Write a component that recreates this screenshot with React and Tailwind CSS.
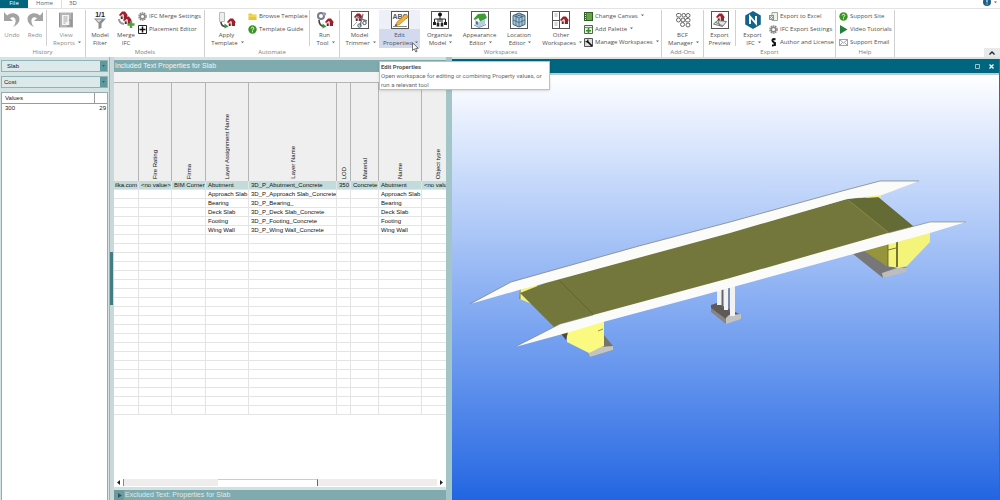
import clsx from "clsx";

/* ---------- ribbon icons ---------- */

const Svg = ({ box = 18, className, children }) => (
    <svg viewBox={`0 0 ${box} ${box}`} className={className || "w-[18px] h-[18px]"} fill="none">
        {children}
    </svg>
);

const House = ({ x = 0, y = 0 }) => (
    <g transform={`translate(${x} ${y})`}>
        <path d="M1 4h7v4H1z" fill="#d9c7c4" />
        <path d="M5 4h3v4H5z" fill="#8d2230" />
        <path d="M0 4 3 0.5h3L9 4.5 5.5 5 4 3 1 5z" fill="#a11f2d" />
        <path d="M2 5.5h1.6V8H2z" fill="#4a2a2a" />
    </g>
);

const Frame = ({ children }) => (
    <Svg>
        <rect x="0.5" y="0.5" width="17" height="17" fill="#fff" stroke="#555" />
        {children}
    </Svg>
);

const UndoIcon = () => (
    <Svg>
        <path d="M1 1v9h9L7 7.200c3-2.200 6-.4 5.600 3.200-.2 2.200-1.200 3.800-2.600 5.600 4-1.800 6.500-4.600 6.500-8C16.500 2.500 9 .2 4 4.400z" fill="#a3a3a3" />
    </Svg>
);
const RedoIcon = () => (
    <Svg>
        <path d="M17 1v9H8l3-2.800C8 5 5 6.800 5.400 10.400c.2 2.200 1.200 3.800 2.600 5.600-4-1.800-6.500-4.600-6.500-8C1.500 2.500 9 .2 14 4.400z" fill="#a3a3a3" />
    </Svg>
);
const ReportIcon = () => (
    <Svg>
        <path d="M2 1.500h14v15H2z" fill="#b5b5b5" />
        <path d="M5 4h7v10H5z" fill="#f4f4f4" />
        <path d="M2.500 2v14M15 2v14" stroke="#8f8f8f" />
        <path d="M6.500 6h4M6.500 8h4M6.500 10h4M6.500 12h2" stroke="#a5a5a5" />
        <path d="M12 9h2v6h-4" stroke="#888" />
    </Svg>
);
const FilterIcon = () => (
    <Svg>
        <text x="9" y="6" textAnchor="middle" fontSize="7" fontWeight="700" fill="#222" fontFamily="Liberation Sans, sans-serif">1/1</text>
        <path d="M3 7.500h12l-4.500 5V17L7.500 18v-5.500z" fill="#8d8d8d" />
        <path d="M5 8.500h6l-3 3z" fill="#dcdcdc" />
    </Svg>
);
const MergeIcon = () => (
    <Svg>
        <House x="2" y="0" />
        <path d="M2 8c0 3 2 4.500 5 5" stroke="#999" strokeWidth="2" />
        <House x="6" y="5" />
        <path d="M14 10v7M10.500 13.500h7" stroke="#4ca53b" strokeWidth="2.400" />
    </Svg>
);
const ApplyIcon = () => (
    <Svg>
        <path d="M1.500 1.500h5v9h-5z" fill="#eee" stroke="#bbb" />
        <path d="M3 11c0 3 2 4.500 5 4.500" stroke="#444" strokeWidth="1.600" />
        <path d="m6.500 12.500 4 3-4 2z" fill="#37933a" />
        <House x="9" y="7" />
    </Svg>
);
const RunIcon = () => (
    <Svg>
        <circle cx="5" cy="5" r="3" stroke="#7a7a8a" strokeWidth="2" />
        <circle cx="8.500" cy="3" r="1.800" fill="#9d9dac" />
        <path d="M3 9c0 4 2 6 5 6.500" stroke="#444" strokeWidth="1.600" />
        <path d="m6.500 12.500 4 3-4 2z" fill="#37933a" />
        <House x="9" y="7" />
    </Svg>
);
const TrimmerIcon = () => (
    <Frame>
        <House x="3" y="2" />
        <path d="M5 5c3 2 7 4 11 5M12 3 9 15" stroke="#777" strokeWidth="1.300" />
        <circle cx="13.500" cy="12" r="1.700" stroke="#3d5960" />
        <circle cx="8.500" cy="14.500" r="1.700" stroke="#3d5960" />
        <path d="m2 15 4-4" stroke="#aaa" />
    </Frame>
);
const EditIcon = () => (
    <Frame>
        <text x="9" y="8" textAnchor="middle" fontSize="7" fontWeight="700" fill="#555" fontFamily="Liberation Sans, sans-serif">ABC</text>
        <path d="M15 3 6 11l-2 4 4.500-1.500L17 6z" fill="#f0b43c" stroke="#a6701b" strokeWidth=".6" />
        <path d="m4 15 1-2 1.200 1.200z" fill="#333" />
        <path d="M2 15.500h14" stroke="#888" />
    </Frame>
);
const OrganizeIcon = () => (
    <Frame>
        <path d="M9 4v4M3.500 12V8h11v4M7 8v6M11 8v6M9 8v3" stroke="#222" />
        <circle cx="9" cy="3.500" r="2" fill="#111" />
        <path d="M2 11h3v3H2zM5.700 12h2.600v3.500H5.700zM9.700 12h2.600v3.500H9.700zM13 11h3v3h-3z" fill="#222" />
    </Frame>
);
const AppearanceIcon = () => (
    <Frame>
        <path d="m4 9 4 2 6-3v5l-6 3-4-2.500z" fill="#b7cbe3" />
        <path d="M2.500 8 7 3l7-.5L16 7l-7 3.500L7.500 7 4 9z" fill="#3f9b35" />
        <path d="m5 10 2 1v3l-2-1z" fill="#54749c" />
        <path d="m3 14 5 2.500 7-3" stroke="#6f9bb5" />
    </Frame>
);
const LocationIcon = () => (
    <Frame>
        <path d="m9 2 6 2.500v9L9 16l-6-2.500v-9z" fill="#a9c2d4" stroke="#3e6681" />
        <path d="m3 4.500 6 2.500 6-2.500M9 7v9M3 9l6 2.500L15 9M6 3.500v11.300M12 3.500v11.300M6 3.300l6 2.400M12 3.300 6 5.700" stroke="#3e6681" strokeWidth=".8" />
    </Frame>
);
const OtherIcon = () => (
    <Frame>
        <path d="M7.500 1v16M1 9.500h6" stroke="#555" />
        <path d="M2.500 3h3M2.500 5h3M2.500 12h3M2.500 14h3" stroke="#aaa" />
        <House x="8" y="5" />
    </Frame>
);
const BcfIcon = () => (
    <Svg>
        <g stroke="#666" strokeWidth="1">
            <rect x="2.500" y="2.500" width="4.500" height="3.500" rx="1.500" />
            <rect x="8" y="2.500" width="3.500" height="3.500" rx="1.500" />
            <circle cx="14" cy="4.500" r="2" />
            <circle cx="4.500" cy="9" r="2" />
            <circle cx="9" cy="9" r="2" />
            <rect x="11.500" y="7.500" width="4.500" height="3.500" rx="1.500" />
            <circle cx="8.500" cy="13.500" r="2" />
            <circle cx="14" cy="14" r="2" />
        </g>
    </Svg>
);
const PreviewIcon = () => (
    <Frame>
        <House x="5" y="2" />
        <path d="m2.500 13 4-3.500 9 1-4 5z" stroke="#777" fill="#e6e6e6" />
        <path d="m4 11 8 4M7 10l2 5" stroke="#666" strokeWidth=".8" />
    </Frame>
);
const HexIcon = () => (
    <Svg>
        <path d="m9 0 7.800 4.500v9L9 18l-7.800-4.500v-9z" fill="#14638a" />
        <path d="M6 13V5.500l6 7V5" stroke="#fff" strokeWidth="1.900" />
    </Svg>
);

const small = "w-[9px] h-[9px] shrink-0";
const Gear = () => (
    <Svg box={9} className={small}>
        <circle cx="4.500" cy="4.500" r="3.600" stroke="#888" strokeWidth="1.400" strokeDasharray="1.600 .66" />
        <circle cx="4.500" cy="4.500" r="2.300" stroke="#888" strokeWidth="1.600" />
    </Svg>
);
const Plus = () => (
    <Svg box={9} className={small}>
        <path d="M.5.5h8v8h-8z" stroke="#222" />
        <path d="M4.500 1.500v6M1.500 4.500h6" stroke="#111" strokeWidth="1.500" />
    </Svg>
);
const Folder = () => (
    <Svg box={9} className={small}>
        <path d="M.5 1.500h3l1 1h4v5.500h-8z" fill="#e9c92f" />
        <path d="M.5 4h8" stroke="#f6e382" />
    </Svg>
);
const Guide = () => (
    <Svg box={9} className={small}>
        <circle cx="4.500" cy="4.500" r="4.200" fill="#3a9623" />
        <path d="M3.200 3.500c0-1.800 2.800-1.600 2.600 0-.1.900-1.300.9-1.300 2M4.500 6.300v1" stroke="#fff" />
    </Svg>
);
const Canvas = () => (
    <Svg box={9} className={small}>
        <path d="M0 0h9v9H0z" fill="#2f5f25" />
        <path d="M2.500 1H8v7H2.500z" fill="#67a548" />
        <path d="M1.500 1v7" stroke="#ddd" strokeDasharray="1 1" />
    </Svg>
);
const Palette = () => (
    <Svg box={9} className={small}>
        <path d="M.5.5h8v8h-8z" stroke="#4a6b46" fill="#e8f0e4" />
        <path d="M1 2.500h7" stroke="#7b9476" />
        <path d="M4.500 3v5.500M2 5.700h5" stroke="#3d8b30" strokeWidth="1.600" />
    </Svg>
);
const Wrench = () => (
    <Svg box={9} className={small}>
        <path d="M.5.5h8v8h-8z" stroke="#555" fill="#ddd" />
        <path d="m3 3 5 5" stroke="#111" strokeWidth="1.700" />
        <path d="M1.500 3.500 3.500 4 4 1.500" stroke="#111" strokeWidth="1.200" />
    </Svg>
);
const Excel = () => (
    <Svg box={9} className={small}>
        <path d="M3 .5h5.500v8H3z" fill="#eef3ee" stroke="#9aa89a" />
        <path d="M0 3h5v5H0z" fill="#7f9d84" />
        <path d="m1.200 4 2.600 3M3.800 4 1.200 7" stroke="#fff" strokeWidth=".8" />
    </Svg>
);
const License = () => (
    <Svg box={9} className={small}>
        <path d="M6.500 1.500c-3-1.200-4 .8-2 2.600s2 3.600-1.500 3.400" stroke="#111" strokeWidth="2" />
        <path d="M6.300 4v4" stroke="#111" />
    </Svg>
);
const Play = () => (
    <Svg box={9} className={small}>
        <path d="M1 0v9l7.500-4.500z" fill="#25803b" />
    </Svg>
);
const Mail = () => (
    <Svg box={9} className={small}>
        <path d="M.5 1.500h8v6h-8zM.5 1.500l4 3.500 4-3.500M.5 7.500 3.500 4.500M8.500 7.500 5.500 4.500" stroke="#8b8b8b" strokeWidth=".8" />
    </Svg>
);

/* ---------- ribbon pieces ---------- */

const Caret = () => (
    <svg viewBox="0 0 4 3" className="inline-block w-[3px] h-[3px] ml-[3px] mb-px" fill="#666">
        <path d="M0 0h4L2 2.500z" />
    </svg>
);

function BigButton({ icon: Icon, lines, menu, width, active, dim }) {
    return (
        <button
            className={clsx(
                "flex flex-col items-center shrink-0 h-[38px] pt-px leading-[8px] whitespace-nowrap",
                width || "w-[40px]",
                active && "bg-linear-to-b from-[#eef0f8] from-50% to-[#d3d9ee] to-50%",
                dim && "text-[#8c8c8c]"
            )}
        >
            <Icon />
            <span className="mt-[2px]">{lines[0]}</span>
            <span className={clsx(menu && "pl-[2px]")}>
                {lines[1]}
                {menu && <Caret />}
            </span>
        </button>
    );
}

function SmallList({ items }) {
    return (
        <div className="flex flex-col shrink-0 gap-[3px] pt-px">
            {items.map(([Icon, text, menu]) => (
                <button key={text} className="flex items-center gap-[2px] h-[10px] leading-[10px] whitespace-nowrap">
                    <Icon />
                    <span>
                        {text}
                        {menu && <Caret />}
                    </span>
                </button>
            ))}
        </div>
    );
}

const Divider = () => <div className="w-px h-[36px] shrink-0 bg-[#d0d0d0]" />;

function Group({ title, width, children }) {
    return (
        <section className={clsx("flex flex-col shrink-0 border-r border-[#d0d0d0]", width)}>
            <div className="flex items-start h-[38px]">{children}</div>
            <h2 className="text-center leading-[9px] text-[#808080]">{title}</h2>
        </section>
    );
}

function Tooltip() {
    return (
        <div role="tooltip" className="absolute left-0 top-[51px] z-20 w-[171px] h-[29px] bg-white border border-[#b9c3c6] px-px text-[#6a6a6a] leading-[9px] whitespace-nowrap shadow-sm font-[Roboto,sans-serif]">
            <p className="font-bold text-[#555]">Edit Properties</p>
            <p>Open workspace for editing or combining Property values, or</p>
            <p>run a relevant tool</p>
        </div>
    );
}

function Ribbon() {
    return (
        <header className="shrink-0 bg-white text-[6px] text-[#505050] font-['Open_Sans',sans-serif]">
            <nav className="flex h-[8px] leading-[6px] items-start">
                <a href="#file" className="w-[28px] h-[8px] bg-[#00667f] text-white text-center">File</a>
                <a href="#home" className="w-[34px] h-[9px] text-center text-[#3b7183] border-r border-[#ddd]">Home</a>
                <a href="#3d" className="w-[22px] text-center">3D</a>
                <button aria-label="Help" className="ml-auto mr-[3px] flex items-center">
                    <svg viewBox="0 0 8 6" className="w-[8px] h-[6px]"><circle cx="4" cy="2" r="4" fill="#1b5f86" /><path d="M4 0v2.500M4 3.500v1" stroke="#fff" /></svg>
                    <Caret />
                </button>
            </nav>
            <div className="flex h-[49px] pt-px border-t border-[#e3e3e3]">
                <Group title="History" width="w-[86px]">
                    <BigButton icon={UndoIcon} lines={["Undo"]} width="w-[24px]" dim />
                    <BigButton icon={RedoIcon} lines={["Redo"]} width="w-[22px]" dim />
                    <Divider />
                    <BigButton icon={ReportIcon} lines={["View", "Reports"]} width="w-[38px]" menu dim />
                </Group>
                <Group title="Models" width="w-[119px]">
                    <BigButton icon={FilterIcon} lines={["Model", "Filter"]} width="w-[28px]" />
                    <BigButton icon={MergeIcon} lines={["Merge", "IFC"]} width="w-[24px]" />
                    <SmallList items={[[Gear, "IFC Merge Settings"], [Plus, "Placement Editor"]]} />
                </Group>
                <Group title="Automate" width="w-[135px]">
                    <BigButton icon={ApplyIcon} lines={["Apply", "Template"]} width="w-[43px]" menu />
                    <SmallList items={[[Folder, "Browse Template"], [Guide, "Template Guide"]]} />
                    <div className="ml-auto"><Divider /></div>
                    <BigButton icon={RunIcon} lines={["Run", "Tool"]} width="w-[29px]" menu />
                </Group>
                <Group title="Workspaces" width="w-[322px]">
                    <BigButton icon={TrimmerIcon} lines={["Model", "Trimmer"]} width="w-[39px]" menu />
                    <div className="relative">
                        <BigButton icon={EditIcon} lines={["Edit", "Properties"]} width="w-[41px]" menu active />
                        <Tooltip />
                        <svg viewBox="0 0 8 12" className="absolute left-[33px] top-[32px] w-[7px] h-[11px] z-30">
                            <path d="M.5.5v9l2.200-2 1.600 3.600 1.500-.7-1.600-3.400h3z" fill="#fff" stroke="#333" strokeWidth=".8" />
                        </svg>
                    </div>
                    <BigButton icon={OrganizeIcon} lines={["Organize", "Model"]} width="w-[39px]" menu />
                    <BigButton icon={AppearanceIcon} lines={["Appearance", "Editor"]} width="w-[41px]" menu />
                    <BigButton icon={LocationIcon} lines={["Location", "Editor"]} width="w-[38px]" menu />
                    <BigButton icon={OtherIcon} lines={["Other", "Workspaces"]} width="w-[46px]" menu />
                    <SmallList items={[[Canvas, "Change Canvas", true], [Palette, "Add Palette", true], [Wrench, "Manage Workspaces", true]]} />
                </Group>
                <Group title="Add-Ons" width="w-[42px]">
                    <BigButton icon={BcfIcon} lines={["BCF", "Manager"]} width="w-[41px]" menu />
                </Group>
                <Group title="Export" width="w-[132px]">
                    <BigButton icon={PreviewIcon} lines={["Export", "Preview"]} width="w-[31px]" />
                    <Divider />
                    <BigButton icon={HexIcon} lines={["Export", "IFC"]} width="w-[33px]" menu />
                    <SmallList items={[[Excel, "Export to Excel"], [Gear, "IFC Export Settings"], [License, "Author and License"]]} />
                </Group>
                <Group title="Help" width="w-[59px]">
                    <div className="pl-[3px]">
                        <SmallList items={[[Guide, "Support Site"], [Play, "Video Tutorials"], [Mail, "Support Email"]]} />
                    </div>
                </Group>
                <button aria-label="Collapse ribbon" className="ml-auto mt-auto w-[16px] h-[9px] bg-[#e6eaea] flex items-center justify-center">
                    <svg viewBox="0 0 6 4" className="w-[6px] h-[4px]"><path d="M.5 3.500 3 1l2.500 2.500" fill="none" stroke="#222" strokeWidth="1.300" /></svg>
                </button>
            </div>
        </header>
    );
}

/* ---------- left side ---------- */

function Picker({ label, value, indent }) {
    return (
        <div className="relative h-[12px] border border-[#8fb3b6] bg-[#dce9ea] shrink-0">
            <select aria-label={label} className={clsx("block w-full h-[10px] leading-[10px] appearance-none outline-none", indent ? "pl-[5px]" : "pl-[2px]")}>
                <option>{value}</option>
            </select>
            <span className="pointer-events-none absolute right-0 inset-y-0 w-[7px] bg-[#5f999e] flex items-center justify-center">
                <svg viewBox="0 0 4 3" className="w-[3px] h-[2px]" fill="#2d666c"><path d="M0 0h4L2 3z" /></svg>
            </span>
        </div>
    );
}

function Sidebar() {
    return (
        <aside className="w-[109px] shrink-0 flex flex-col gap-1 pl-px pr-px pt-[3px] text-[6px] text-[#222]">
            <Picker label="Group" value="Slab" indent />
            <Picker label="Property" value="Cost" />
            <div className="flex-1 bg-white border border-b-0 border-[#9aa9ab]">
                <table className="w-full border-separate border-spacing-0">
                    <thead>
                        <tr className="h-[11px]">
                            <th className="text-left font-normal p-0 pl-[3px] border-b border-r border-[#9a9a9a]">Values</th>
                            <th className="w-[12px] p-0 border-b border-[#9a9a9a]" />
                        </tr>
                    </thead>
                    <tbody>
                        <tr className="h-[9px]">
                            <td className="p-0 pl-[3px]">300</td>
                            <td className="p-0 pr-px text-right">29</td>
                        </tr>
                    </tbody>
                </table>
            </div>
        </aside>
    );
}

/* ---------- property grid ---------- */

const columns = [
    ["", "w-[25px]"],
    ["Fire Rating", "w-[33px]"],
    ["Firma", "w-[34px]"],
    ["Layer Assignment Name", "w-[43px]"],
    ["Layer Name", "w-[88px]"],
    ["LOD", "w-[14px]"],
    ["Material", "w-[28px]"],
    ["Name", "w-[43px]"],
    ["Object type", "w-[33px]"],
];

const rows = [
    ["ilka.com", "<no value>", "BIM Corner", "Abutment", "3D_P_Abutment_Concrete", "350", "Concrete", "Abutment", "<no value>"],
    ["", "", "", "Approach Slab", "3D_P_Approach Slab_Concrete", "", "", "Approach Slab", ""],
    ["", "", "", "Bearing", "3D_P_Bearing_", "", "", "Bearing", ""],
    ["", "", "", "Deck Slab", "3D_P_Deck Slab_Concrete", "", "", "Deck Slab", ""],
    ["", "", "", "Footing", "3D_P_Footing_Concrete", "", "", "Footing", ""],
    ["", "", "", "Wing Wall", "3D_P_Wing Wall_Concrete", "", "", "Wing Wall", ""],
];
while (rows.length < 26) rows.push(Array(9).fill(""));

function PropertyPanel() {
    return (
        <section className="w-[332px] shrink-0 flex flex-col bg-white text-[6px] text-[#111] overflow-hidden">
            <h2 className="h-[12px] shrink-0 bg-[#7fabae] text-[#eef6f6] text-[7px] leading-[12px] pl-px">Included Text Properties for Slab</h2>
            <div className="h-[10px] shrink-0 bg-[#f3f3f3]" />
            <div className="shrink-0 overflow-hidden">
                <table className="table-fixed w-[341px] border-separate border-spacing-0">
                    <colgroup>
                        {columns.map(([name, w]) => <col key={name} className={w} />)}
                    </colgroup>
                    <thead>
                        <tr className="h-[99px] bg-[#efefef]">
                            {columns.map(([name]) => (
                                <th key={name} className="p-0 pb-[2px] align-bottom font-normal border-t border-r border-[#b4b4b4]">
                                    <span className="[writing-mode:vertical-rl] rotate-180 inline-block leading-[8px] whitespace-nowrap align-bottom">{name}</span>
                                </th>
                            ))}
                        </tr>
                    </thead>
                    <tbody>
                        {rows.map((row, r) => (
                            <tr key={r} className={clsx("h-[9px]", r === 0 && "bg-[#c3dcdb]")}>
                                {row.map((cell, c) => (
                                    <td
                                        key={c}
                                        className={clsx(
                                            "p-0 leading-[8px] h-[9px] whitespace-nowrap overflow-hidden border-r border-b border-[#e4e4e4]",
                                            c === 0 ? "text-right pr-px" : "pl-[2px]"
                                        )}
                                    >
                                        {cell}
                                    </td>
                                ))}
                            </tr>
                        ))}
                    </tbody>
                </table>
            </div>
            <div className="flex-1" />
            <div className="flex items-center h-[9px] shrink-0 px-[3px] gap-[3px]">
                <svg viewBox="0 0 3 5" className="w-[3px] h-[5px]"><path d="M3 0v5L0 2.500z" fill="#222" /></svg>
                <div className="flex flex-1 h-[7px] border-l border-[#888] bg-[#eeecec]">
                    <div className="ml-[30%] w-[32%] bg-white border-t border-r border-t-[#ccc] border-r-[#666]" />
                </div>
                <svg viewBox="0 0 3 5" className="w-[3px] h-[5px]"><path d="M0 0v5l3-2.500z" fill="#222" /></svg>
            </div>
            <div className="h-[3px] shrink-0 bg-[#cfe2e3]" />
            <h2 className="h-[10px] shrink-0 flex items-center bg-[#7fabae] text-[#dcebeb] text-[7px] leading-[10px]">
                <span className="w-[10px] h-[10px] bg-[#6d9a9e] flex items-center justify-center">
                    <svg viewBox="0 0 5 5" className="w-[5px] h-[5px]"><path d="M1 0v5l4-2.500z" fill="#2d5a60" /></svg>
                </span>
                <span className="pl-px">Excluded Text: Properties for Slab</span>
            </h2>
        </section>
    );
}

/* ---------- 3D view ---------- */

function Bridge() {
    return (
        <svg viewBox="452 75 547 425" preserveAspectRatio="xMidYMid slice" className="block w-full h-full">
            {/* far end abutment */}
            <path d="M853 254l13-5 22 18 19 0-24 11z" fill="#77777a" />
            <path d="M882 273l18-6 7 1-1 4-23 6z" fill="#bdbdbd" />
            <path d="M864 251l24-9v25z" fill="#97953b" />
            <path d="M888 241l42-10v11l-23 24-9 2-10-2z" fill="#f4f37a" />
            <path d="M888 241v26M888 250l8-2" stroke="#5a5a25" strokeWidth=".8" />
            <path d="M897 240v27" stroke="#4c4a1f" strokeWidth="1.500" />
            {/* pier */}
            <path d="M711 305l6-2 24 12-15 5-15-10z" fill="#5f5a58" />
            <path d="M711 308l15 11v5l-15-12z" fill="#858585" />
            <path d="M726 318l3-3 12-1v5l-15 5z" fill="#c2c2c2" />
            <path d="M717 288h4v17h-4zM724 287h4v23h-4zM730 284h5v32h-5z" fill="#f2f2f4" />
            <path d="M722.500 288v20M729 286v26" stroke="#666" />
            {/* near abutment */}
            <path d="M588 352l16-17 9 11v4l-23 7z" fill="#77746a" />
            <path d="M588 352l12-5 13-1v4l-23 7z" fill="#c4c4c0" />
            <path d="M567 331l37-10v25l-5 2-10 5-22-11z" fill="#fbfa80" />
            <path d="M598 331l5-2" stroke="#77763c" strokeWidth=".8" />
            <path d="M519 289l18-4v6l-3 14-14-6z" fill="#f3f27c" />
            {/* deck */}
            <path d="M541 313l14 13 11 14 2-8-12-7z" fill="#514c2b" />
            <path d="M520 293l33-13 177-48 117-33 31-2 36 30-26 9-158 45-130 35-45 12z" fill="#74773b" />
            <path d="M847 199l31-2 36 30-22 8z" fill="#656b34" />
            <path d="M847 199l42 34" stroke="#8d9049" strokeWidth=".8" />
            <path d="M559 280l34 34" stroke="#5d612f" strokeWidth=".8" />
            <path d="M864 198l17-6v5z" fill="#f3f27c" />
            <path d="M520 299v-10l33-11" stroke="#44431f" strokeWidth=".7" fill="none" />
            {/* parapets */}
            <path d="M470 304l41-22 128-36 91-24 112-31 38-10 39 0-37 14-35 4-117 34-177 48-34 9z" fill="#fbfcfa" />
            <path d="M470 304l41-22 128-36 91-24 112-31 38-10 39 0" fill="none" stroke="#77786f" strokeWidth=".7" />
            <path d="M515 347l45-23 33-9 137-37 158-45 42-11 36 0-36 11-73 20-157 43-97 26-33 10z" fill="#fbfcfa" />
            <path d="M888 233l42-11 36 0M515 347l45-23 33-9" fill="none" stroke="#77786f" strokeWidth=".6" />
        </svg>
    );
}

function Viewer() {
    return (
        <section className="flex-1 min-w-0 flex flex-col border-r border-[#40688f]">
            <div className="h-[14px] shrink-0 bg-[#00667f] flex items-center justify-end gap-[9px] pr-[5px] text-white">
                <button aria-label="Maximize">
                    <svg viewBox="0 0 5 5" className="w-[5px] h-[5px]"><path d="M.5.5h4v4h-4z" fill="none" stroke="#c0dce3" strokeWidth=".8" /></svg>
                </button>
                <button aria-label="Close">
                    <svg viewBox="0 0 5 5" className="w-[5px] h-[5px]"><path d="m.5.5 4 4m0-4-4 4" stroke="#fff" strokeWidth="1.300" /></svg>
                </button>
            </div>
            <div className="h-[2px] shrink-0 bg-[#b8cdd2]" />
            <div className="flex-1 min-h-0 bg-linear-to-b from-white via-[#8fb2f3] via-50% to-[#2165e2]">
                <Bridge />
            </div>
        </section>
    );
}

export default function App() {
    return (
        <div className="h-screen flex flex-col overflow-hidden bg-[#d6e3e5] font-['Liberation_Sans',sans-serif]">
            <Ribbon />
            <main className="flex flex-1 min-h-0">
                <Sidebar />
                <div className="w-[5px] shrink-0 bg-[#cbd8da] border-l border-[#9fb2b5] flex items-center">
                    <div className="w-[3px] h-[53px] bg-[#427d85]" />
                </div>
                <div className="flex pt-[3px]"><PropertyPanel /></div>
                <div className="w-[6px] shrink-0 bg-[#a4c5c8]" />
                <div className="flex flex-1 min-w-0 pt-[2px]"><Viewer /></div>
            </main>
        </div>
    );
}
